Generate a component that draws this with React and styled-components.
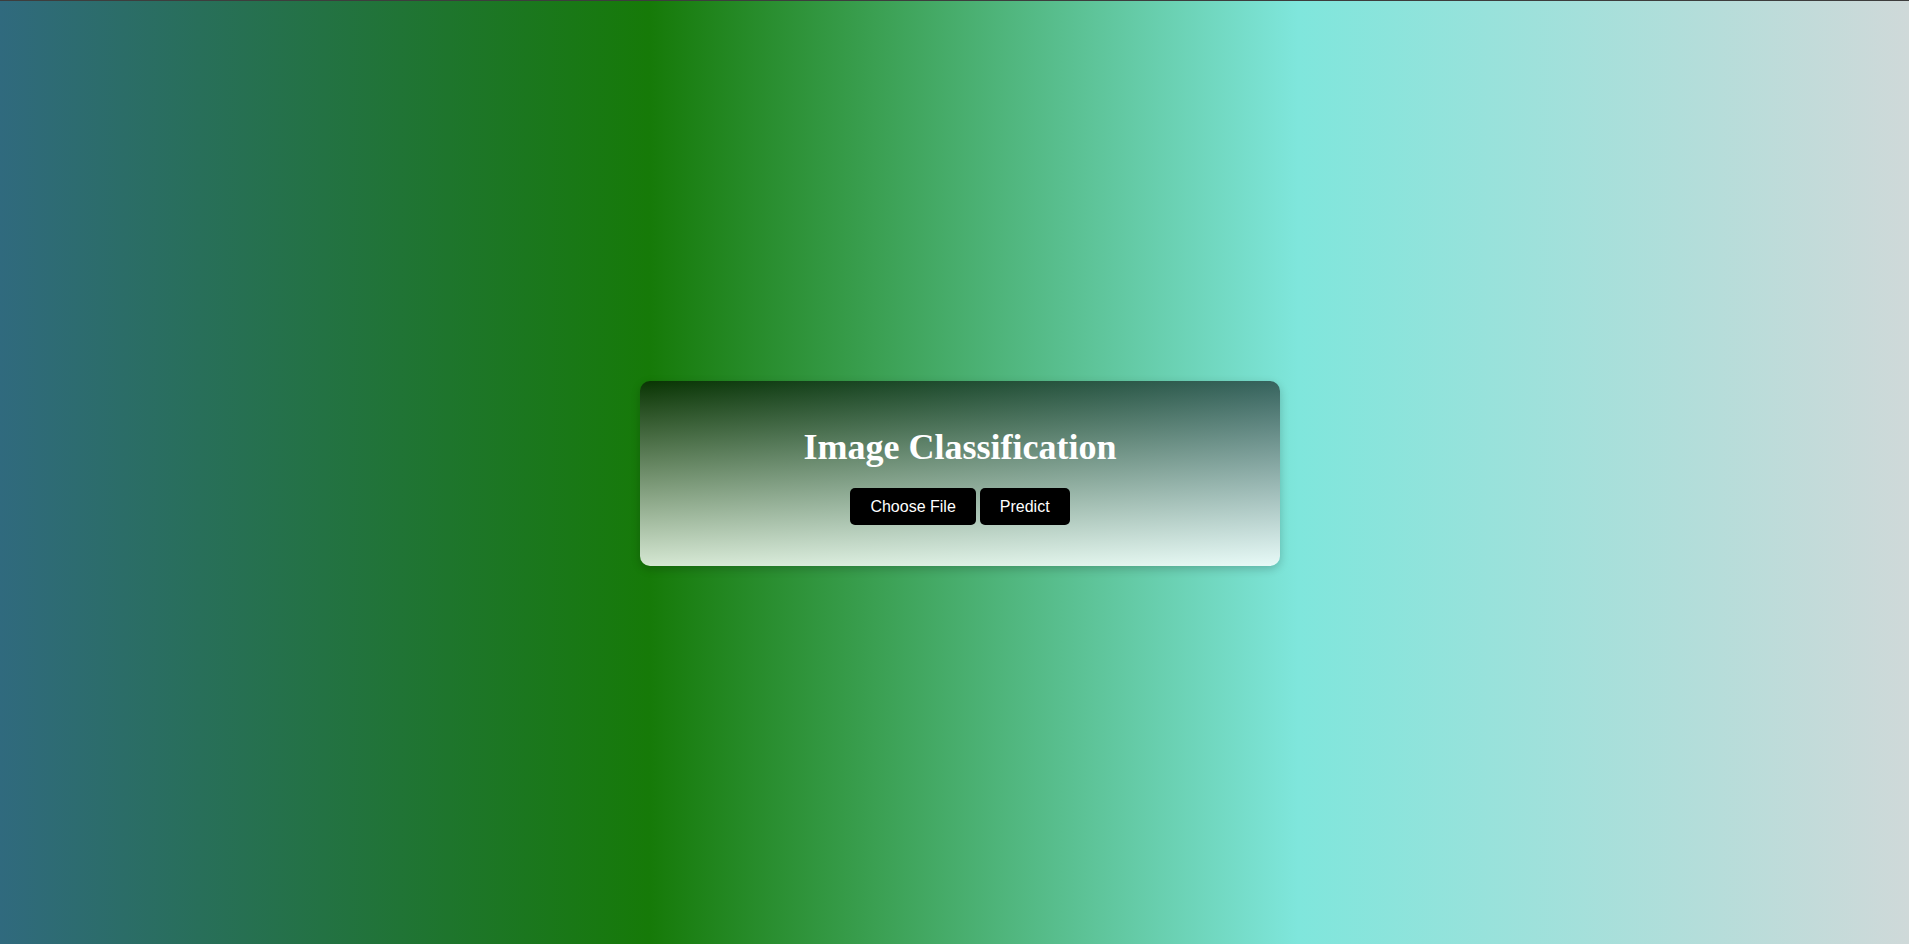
import React from "react";
import styled, { createGlobalStyle } from "styled-components";

const GlobalStyle = createGlobalStyle`
  * {
    box-sizing: border-box;
  }
  body {
    margin: 0;
    font-family: "Liberation Sans", Arial, sans-serif;
  }
`;

const App = () => {
  return (
    <>
      <GlobalStyle />
      <Page>
        <Card>
          <Title>Image Classification</Title>
          <Actions>
            <FileLabel>
              Choose File
              <HiddenInput type="file" accept="image/*" />
            </FileLabel>
            <Button type="button">Predict</Button>
          </Actions>
        </Card>
      </Page>
    </>
  );
};

//styled components
const Page = styled.div`
  min-height: 100vh;
  border-top: 1px solid #3d3d3d;
  padding: 2px 0 0 11px;
  display: flex;
  align-items: center;
  justify-content: center;
  background: linear-gradient(
    to right,
    #306a7e 0%,
    #167a08 34%,
    #7fe6dc 68%,
    #cfd9d9 100%
  );
`;

const Card = styled.div`
  width: 640px;
  padding: 46px 0 41px;
  border-radius: 10px;
  text-align: center;
  background: linear-gradient(
    to bottom,
    rgba(0, 0, 0, 0.56),
    rgba(255, 255, 255, 0.82)
  );
  box-shadow: 0 3px 10px rgba(0, 0, 0, 0.2);
`;

const Title = styled.h1`
  margin: 0;
  font-family: "Liberation Serif", "Times New Roman", serif;
  font-size: 36px;
  line-height: 40px;
  font-weight: 700;
  color: #ffffff;
`;

const Actions = styled.div`
  margin-top: 21px;
  display: flex;
  justify-content: center;
  gap: 4px;
`;

const Button = styled.button`
  height: 37px;
  padding: 0 20px;
  border: none;
  border-radius: 5px;
  background: #000000;
  color: #ffffff;
  font-family: "Liberation Sans", Arial, sans-serif;
  font-size: 16px;
  line-height: 37px;
  cursor: pointer;
`;

const FileLabel = styled(Button).attrs({ as: "label" })`
  display: inline-block;
`;

const HiddenInput = styled.input`
  display: none;
`;

export default App;
